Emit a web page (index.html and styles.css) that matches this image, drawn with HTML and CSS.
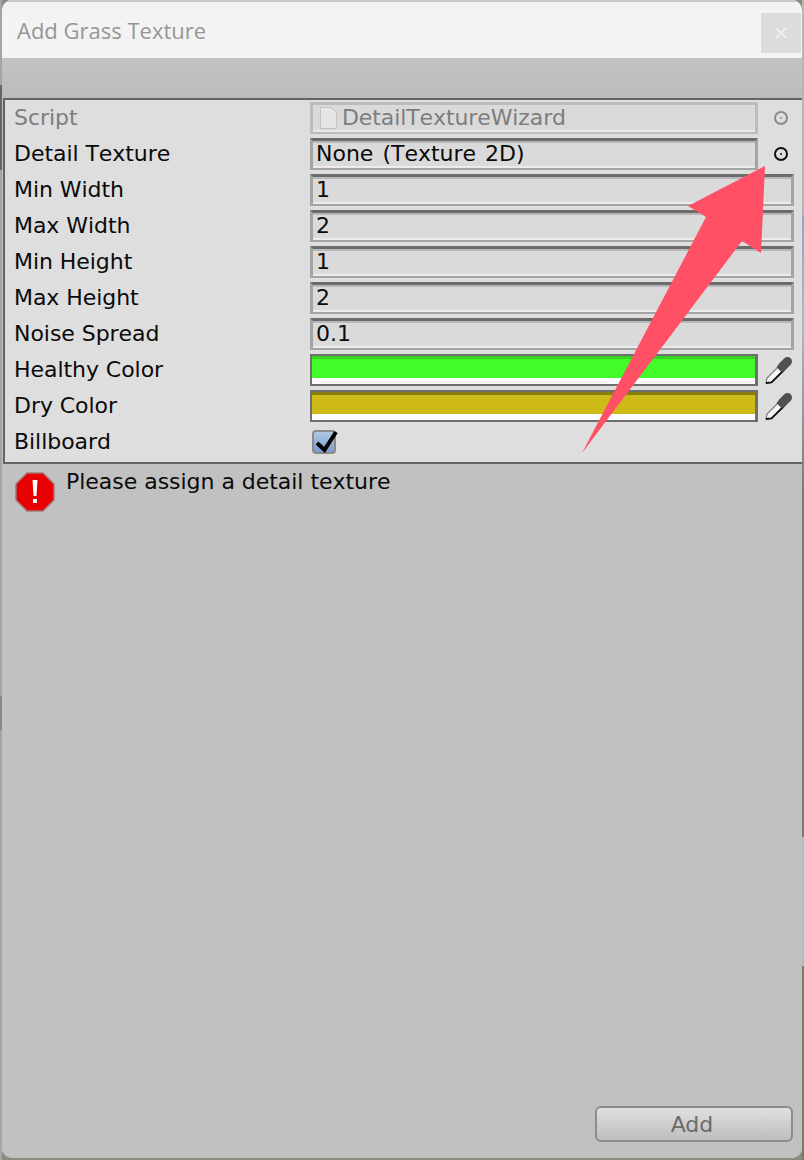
FILE: index.html
```html
<!DOCTYPE html>
<html lang="en">
<head>
    <meta charset="UTF-8">
    <meta name="viewport" content="width=device-width, initial-scale=1.0">
    <title>Add Grass Texture</title>
    <link rel="stylesheet" href="styles.css">
</head>
<body>
    <div class="janela">
        <div class="titulo">
            <span class="titulo-texto">Add Grass Texture</span>
            <div class="fechar">
                <svg width="12" height="12" viewBox="0 0 12 12"><path d="M1 1L11 11M11 1L1 11" stroke="#f1f1f1" stroke-width="1.6" fill="none"/></svg>
            </div>
        </div>

        <div class="corpo">
            <div class="painel">
                <div class="linha desativada">
                    <span class="rotulo">Script</span>
                    <div class="campo campo-curto campo-desativado">
                        <svg class="icone-doc" width="17" height="22" viewBox="0 0 17 22"><path d="M.5 .5H11L16.500 5.500V21.500H.5Z" fill="#e4e6e8" stroke="#c2c2c2"/></svg>
                        <span>DetailTextureWizard</span>
                    </div>
                    <svg class="alvo" width="16" height="16" viewBox="0 0 16 16"><circle cx="8" cy="8" r="6" fill="none" stroke="#8a8a8a" stroke-width="2"/><circle cx="8" cy="8" r="1" fill="#8a8a8a"/></svg>
                </div>
                <div class="linha">
                    <span class="rotulo">Detail Texture</span>
                    <div class="campo campo-curto">None (Texture 2D)</div>
                    <svg class="alvo" width="16" height="16" viewBox="0 0 16 16"><circle cx="8" cy="8" r="6" fill="none" stroke="#111" stroke-width="2"/><circle cx="8" cy="8" r="1" fill="#111"/></svg>
                </div>
                <div class="linha"><span class="rotulo">Min Width</span><div class="campo">1</div></div>
                <div class="linha"><span class="rotulo">Max Width</span><div class="campo">2</div></div>
                <div class="linha"><span class="rotulo">Min Height</span><div class="campo">1</div></div>
                <div class="linha"><span class="rotulo">Max Height</span><div class="campo">2</div></div>
                <div class="linha"><span class="rotulo">Noise Spread</span><div class="campo">0.1</div></div>
                <div class="linha">
                    <span class="rotulo">Healthy Color</span>
                    <div class="cor"><div class="cor-verde"></div></div>
                    <svg class="conta-gotas" width="30" height="30" viewBox="0 0 30 30"><path d="M2 28L3 23L15 11L19.500 15.500L7.500 27.500Z" fill="#f6f6f6" stroke="#777" stroke-width="1.200"/><path d="M2 28L7.500 27.500L19.500 15.500" fill="none" stroke="#111" stroke-width="1.800"/><path d="M14 10.500L20 16.500" stroke="#444" stroke-width="4"/><path d="M18.500 11.500L23.500 6.500" stroke="#505050" stroke-width="9" stroke-linecap="round"/></svg>
                </div>
                <div class="linha">
                    <span class="rotulo">Dry Color</span>
                    <div class="cor"><div class="cor-amarela"></div></div>
                    <svg class="conta-gotas" width="30" height="30" viewBox="0 0 30 30"><path d="M2 28L3 23L15 11L19.500 15.500L7.500 27.500Z" fill="#f6f6f6" stroke="#777" stroke-width="1.200"/><path d="M2 28L7.500 27.500L19.500 15.500" fill="none" stroke="#111" stroke-width="1.800"/><path d="M14 10.500L20 16.500" stroke="#444" stroke-width="4"/><path d="M18.500 11.500L23.500 6.500" stroke="#505050" stroke-width="9" stroke-linecap="round"/></svg>
                </div>
                <div class="linha">
                    <span class="rotulo">Billboard</span>
                    <div class="caixa">
                        <svg class="visto" width="26" height="26" viewBox="0 0 26 26"><path d="M5 13L12.500 20L24 2" fill="none" stroke="#000" stroke-width="4"/></svg>
                    </div>
                </div>
            </div>

            <div class="aviso">
                <svg width="42" height="42" viewBox="0 0 42 42"><path d="M13 2H29L40 13V29L29 40H13L2 29V13Z" fill="#e80000" stroke="#a07878" stroke-width="1.500"/><path d="M18.500 9H23.500L22.500 25H19.500Z" fill="#fff"/><rect x="19" y="28" width="4" height="4" fill="#fff"/></svg>
                <span class="aviso-texto">Please assign a detail texture</span>
            </div>

            <div class="rodape">
                <button class="botao">Add</button>
            </div>
        </div>

        <!-- Seta por cima do painel -->
        <svg class="seta" width="190" height="290" viewBox="0 0 190 290"><path d="M2 288L126 52L108 41L185 1L181 88L162 76Z" fill="#ff5065"/></svg>
    </div>
</body>
</html>
```
FILE: styles.css
```css
* {
    margin: 0;
    padding: 0;
    box-sizing: border-box;
}

body {
    width: 804px;
    height: 1160px;
    overflow: hidden;
    background-color: #8c8a80;
    background-image:
        linear-gradient(#a5a5a5 85px, #666 85px, #666 170px, #a5a5a5 170px, #a5a5a5 696px, #888 696px, #888 730px, #a5a5a5 730px),
        linear-gradient(#b5b5b5 215px, #8fa6c8 215px, #a9bcc0 322px, #7a7676 500px, #7a7676 837px, #a9c0c0 837px, #a9c0c0 966px, #7a7a5f 966px);
    background-size: 2px 100%, 2px 100%;
    background-position: left top, right top;
    background-repeat: no-repeat;
}

.janela {
    position: relative;
    width: 800px;
    height: 1158px;
    margin-left: 2px;
    display: flex;
    flex-direction: column;
    background-color: #c1c1c1;
    border-radius: 10px;
    overflow: hidden;
}

.titulo {
    height: 58px;
    flex-shrink: 0;
    display: flex;
    justify-content: space-between;
    background-color: #f3f3f3;
    padding: 11px 1px 0 15px;
    border-top: 2px solid #c8c8cc;
}

.titulo-texto {
    padding-top: 2px;
    font-family: "Open Sans", sans-serif;
    font-size: 22px;
    line-height: 30px;
    color: #969696;
}

.fechar {
    width: 40px;
    height: 40px;
    display: flex;
    align-items: center;
    justify-content: center;
    background-color: #dcdcdc;
}

.corpo {
    flex: 1;
    display: flex;
    flex-direction: column;
    background: linear-gradient(#c3c3c3, #bcbcbc 40px, #c1c1c1 40px);
    padding-top: 40px;
    font-family: "DejaVu Sans", sans-serif;
    font-size: 22px;
    font-kerning: none;
    color: #0a0a0a;
}

.painel {
    display: flex;
    flex-direction: column;
    margin-left: 1px;
    height: 366px;
    padding-left: 9px;
    background-color: #dedede;
    border: 2px solid #636363;
    border-right: none;
}

.linha {
    height: 36px;
    display: flex;
    align-items: center;
}

.desativada {
    color: #7d7d7d;
}

.rotulo {
    width: 296px;
    flex-shrink: 0;
    padding-bottom: 2px;
    letter-spacing: -.05px;
}

.campo {
    width: 484px;
    height: 32px;
    display: flex;
    align-items: center;
    padding: 0 0 2px 3px;
    word-spacing: 2px;
    background-color: #dadada;
    border: 3px solid #a4a4a4;
    border-top-color: #6b6b6b;
    border-bottom-width: 2px;
    box-shadow: inset 0 2px #b8b8b8, inset 0 -2px #ececec;
}

.campo-curto {
    width: 448px;
}

.campo-desativado {
    border-color: #bcbcbc;
    box-shadow: inset 0 -2px #e8e8e8;
    padding-left: 7px;
    letter-spacing: -.1px;
}

.icone-doc {
    margin-right: 5px;
}

.alvo {
    margin-left: 15px;
}

.cor {
    width: 448px;
    height: 32px;
    border: 2px solid #6f6f6f;
    border-right-width: 3px;
    background-color: #fff;
}

.cor-verde {
    height: 22px;
    background-color: #42fb29;
    border-top: 3px solid #37d122;
}

.cor-amarela {
    height: 22px;
    background-color: #cdba17;
    border-top: 3px solid #8a7d10;
}

.conta-gotas {
    margin-left: 6px;
}

.caixa {
    position: relative;
    width: 24px;
    height: 24px;
    margin-left: 2px;
    background: linear-gradient(#b0c8e6, #7a9ccb);
    border: 2px solid #8b8b8b;
    border-radius: 4px;
}

.visto {
    position: absolute;
    top: -2px;
    left: -2px;
}

.aviso {
    display: flex;
    align-items: flex-start;
    gap: 10px;
    padding: 7px 0 0 12px;
    color: #0a0a0a;
}

.aviso-texto {
    margin-top: -2px;
    letter-spacing: -.03px;
}

.rodape {
    margin-top: auto;
    display: flex;
    justify-content: flex-end;
    padding: 0 9px 16px 0;
}

.botao {
    width: 198px;
    height: 36px;
    padding-right: 4px;
    font-family: "DejaVu Sans", sans-serif;
    font-size: 22px;
    color: #6b6b6b;
    background: linear-gradient(#e0e0e0, #bebebe);
    border: 2px solid #8c8c8c;
    border-radius: 6px;
}

.seta {
    position: absolute;
    top: 165px;
    left: 578px;
}
```
